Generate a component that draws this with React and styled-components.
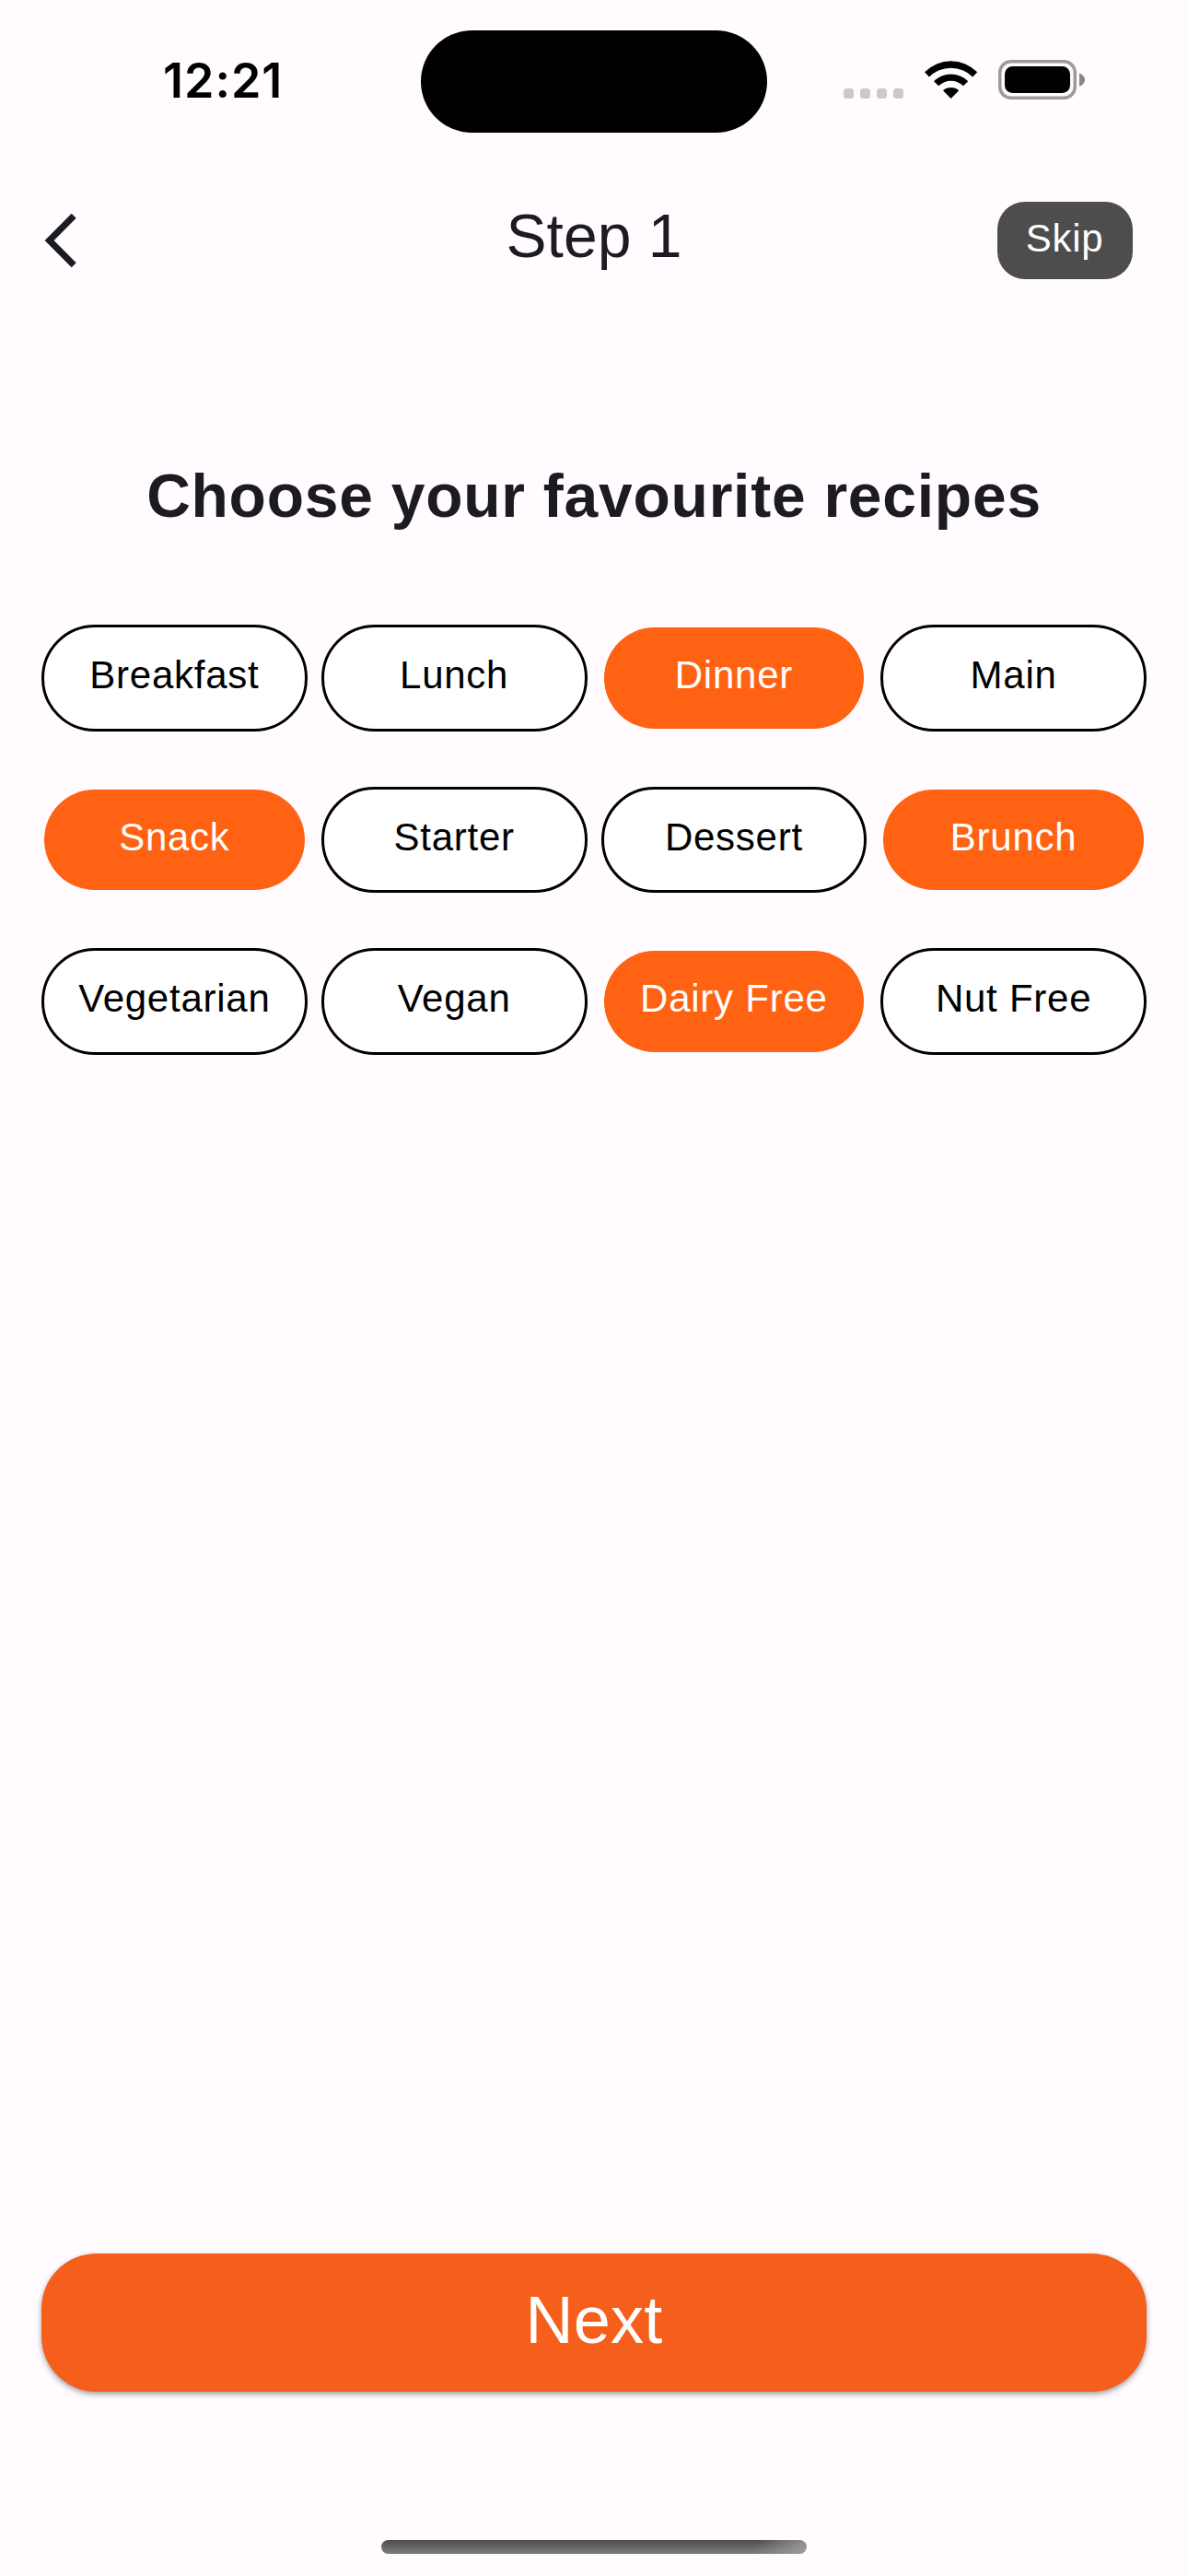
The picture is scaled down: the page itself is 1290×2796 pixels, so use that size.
import React, { useState } from "react";
import styled, { createGlobalStyle, css } from "styled-components";

const GlobalStyle = createGlobalStyle`
  *, *::before, *::after { box-sizing: border-box; }
  html, body { margin: 0; padding: 0; background: #fffbff; }
  button { margin: 0; padding: 0; border: 0; background: none; font: inherit; color: inherit; cursor: pointer; }
`;

const Screen = styled.main`
  display: flex;
  flex-direction: column;
  width: 1290px;
  height: 2796px;
  overflow: hidden;
  background: #fffbff;
  color: #1c1b1f;
  font-family: "Liberation Sans", Arial, sans-serif;
`;

const StatusBar = styled.div`
  display: grid;
  grid-template-columns: 457px 376px 1fr;
  align-items: center;
  height: 177px;
  flex: none;
`;

const Clock = styled.time`
  padding-left: 177px;
  margin-bottom: 1px;
  font: 600 52px/60px Inter, sans-serif;
  letter-spacing: 1px;
  color: #000;
`;

const Island = styled.div`
  height: 111px;
  border-radius: 56px;
  background: #000;
`;

const StatusIcons = styled.div`
  display: flex;
  align-items: flex-end;
  height: 43px;
  margin-bottom: 4px;
  padding-left: 83px;
`;

const SignalDots = styled.div`
  display: flex;
  gap: 7px;
  margin: 0 23px 1px 0;
`;

const SignalDot = styled.i`
  width: 11px;
  height: 11px;
  border-radius: 3.5px;
  background: #cbc8cc;
`;

const WifiIcon = styled.svg`
  display: block;
  width: 58px;
  height: 43px;
  margin-right: 22px;
`;

const BatteryIcon = styled.svg`
  display: block;
  width: 95px;
  height: 43px;
`;

const Header = styled.header`
  display: grid;
  grid-template-columns: 1fr auto 1fr;
  align-items: center;
  height: 168px;
  padding: 0 48px;
  flex: none;
`;

const BackButton = styled.button`
  display: flex;
  justify-self: start;
`;

const HeaderTitle = styled.h1`
  margin: 0 0 10px;
  font-size: 66px;
  font-weight: 400;
  line-height: 76px;
`;

const SkipButton = styled.button`
  justify-self: end;
  width: 147px;
  height: 84px;
  margin-right: 12px;
  padding: 0 1px 5px 0;
  border-radius: 30px;
  background: #4d4d4d;
  color: #fff;
  font-size: 42px;
  line-height: 48px;
  letter-spacing: 0.75px;
`;

const Heading = styled.h2`
  margin: 155px 0 0;
  font-size: 66px;
  font-weight: 700;
  line-height: 76px;
  letter-spacing: 0.75px;
  text-align: center;
`;

const ChipGrid = styled.div`
  display: grid;
  grid-template-columns: repeat(4, 1fr);
  grid-auto-rows: 115.5px;
  gap: 60px 15px;
  margin-top: 102px;
  padding: 0 45px;
`;

const Chip = styled.button`
  padding-bottom: 5px;
  border: 3px solid #000;
  border-radius: 60px;
  background: #fff;
  color: #000;
  font-size: 42px;
  line-height: 48px;
  letter-spacing: 0.75px;
  white-space: nowrap;
  ${({ $selected }) =>
    $selected &&
    css`
      border-color: transparent;
      background: #fe6212 padding-box;
      color: #fff;
    `}
`;

const Footer = styled.footer`
  display: flex;
  flex-direction: column;
  align-items: center;
  margin-top: auto;
  padding: 0 45px 24px;
`;

const NextButton = styled.button`
  width: 100%;
  height: 150px;
  padding-bottom: 6px;
  border-radius: 60px;
  background: #f65e1b;
  box-shadow: 0 3px 6px rgba(0, 0, 0, 0.3), 0 1px 4px rgba(0, 0, 0, 0.12);
  color: #fff;
  font-size: 72px;
  line-height: 82px;
  letter-spacing: 0.3px;
`;

const HomeIndicator = styled.div`
  width: 462px;
  height: 15px;
  margin-top: 161px;
  border-radius: 8px;
  background:
    linear-gradient(100deg, rgba(170, 168, 171, 0) 88%, rgba(170, 168, 171, 0.75) 100%),
    linear-gradient(#4a4c4b, #807e81);
`;

const RECIPES = [
  "Breakfast", "Lunch", "Dinner", "Main",
  "Snack", "Starter", "Dessert", "Brunch",
  "Vegetarian", "Vegan", "Dairy Free", "Nut Free",
];

export default function App() {
  const [selected, setSelected] = useState(["Dinner", "Snack", "Brunch", "Dairy Free"]);

  const toggle = (name) =>
    setSelected((list) =>
      list.includes(name) ? list.filter((item) => item !== name) : [...list, name]
    );

  return (
    <>
      <GlobalStyle />
      <Screen>
        <StatusBar>
          <Clock>12:21</Clock>
          <Island />
          <StatusIcons>
            <SignalDots>
              {[0, 1, 2, 3].map((dot) => <SignalDot key={dot} />)}
            </SignalDots>
            <WifiIcon viewBox="0 0 58 43" aria-label="Wi-Fi">
              <path d="M0 13.3A40 40 0 0 1 57.2 13.3L52.2 18.4A33.4 33.4 0 0 0 5 18.4Z" />
              <path d="M10 23.2A26.5 26.5 0 0 1 47.2 23.2L42 28.3A19.2 19.2 0 0 0 15.2 28.3Z" />
              <path d="M20 33.2A13 13 0 0 1 37.2 33.2L28.6 42Z" />
            </WifiIcon>
            <BatteryIcon viewBox="0 0 95 43" aria-label="Battery full">
              <rect x="1.75" y="1.75" width="81.5" height="39.5" rx="12" fill="none" stroke="#9c9a9d" strokeWidth="3.5" />
              <rect x="7" y="7" width="71" height="29" rx="8.5" />
              <path d="M88 14.5C91.5 15.8 94 18.5 94 21.5S91.5 27.4 88 28.7Z" fill="#878588" />
            </BatteryIcon>
          </StatusIcons>
        </StatusBar>

        <Header>
          <BackButton aria-label="Back">
            <svg width="36" height="60" viewBox="0 0 36 60">
              <path d="M29.7 .7L34.7 5.7L10.6 30L34.7 54.2L29.7 59.2L.6 30Z" fill="#1c1b1f" />
            </svg>
          </BackButton>
          <HeaderTitle>Step 1</HeaderTitle>
          <SkipButton>Skip</SkipButton>
        </Header>

        <Heading>Choose your favourite recipes</Heading>

        <ChipGrid>
          {RECIPES.map((name) => (
            <Chip
              key={name}
              $selected={selected.includes(name)}
              aria-pressed={selected.includes(name)}
              onClick={() => toggle(name)}
            >
              {name}
            </Chip>
          ))}
        </ChipGrid>

        <Footer>
          <NextButton>Next</NextButton>
          <HomeIndicator />
        </Footer>
      </Screen>
    </>
  );
}
